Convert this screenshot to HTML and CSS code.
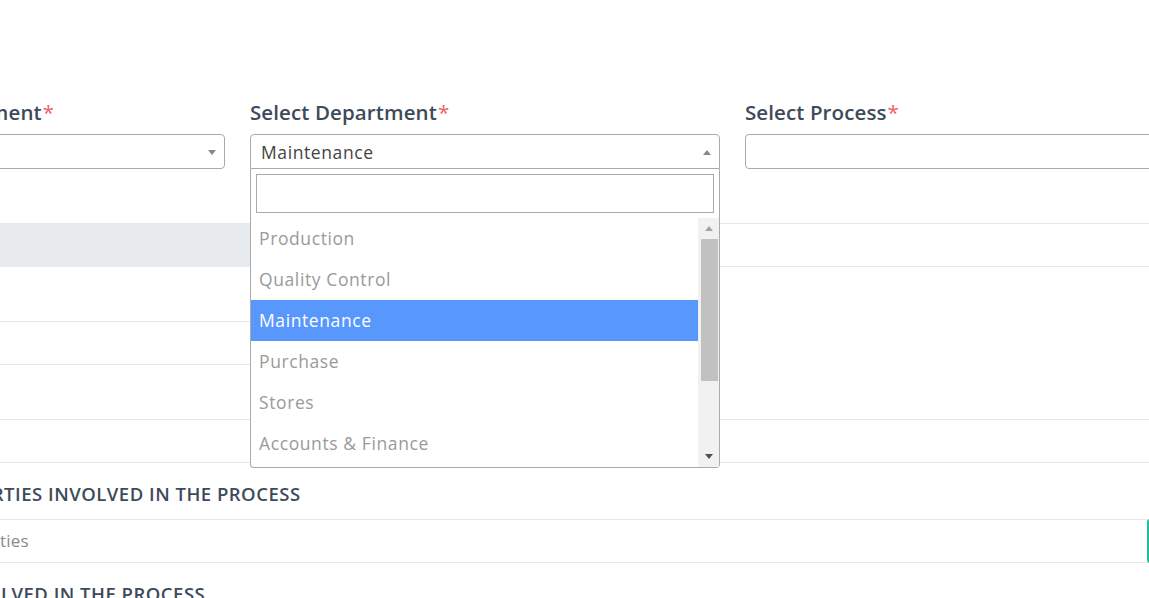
FILE: index.html
```html
<!DOCTYPE html>
<html lang="en">
<head>
<meta charset="utf-8">
<title>Process Form</title>
<link rel="stylesheet" href="styles.css">
</head>
<body>
<div class="page">
  <div class="form-row">
    <div class="field">
      <label class="label">Select Company Department<span class="req">*</span></label>
      <div class="select"><span class="select-text"></span><span class="arrow down"></span></div>
    </div>
    <div class="field">
      <label class="label">Select Department<span class="req">*</span></label>
      <div class="select open">
        <span class="select-text">Maintenance</span><span class="arrow up"></span>
        <div class="dropdown">
          <div class="search-wrap"><input class="search" type="text"></div>
          <div class="results">
            <ul class="options">
              <li>Production</li>
              <li>Quality Control</li>
              <li class="active">Maintenance</li>
              <li>Purchase</li>
              <li>Stores</li>
              <li>Accounts &amp; Finance</li>
            </ul>
            <div class="scrollbar">
              <span class="sb-btn"><span class="sb-up"></span></span>
              <span class="sb-thumb"></span>
              <span class="sb-space"></span>
              <span class="sb-btn"><span class="sb-down"></span></span>
            </div>
          </div>
        </div>
      </div>
    </div>
    <div class="field">
      <label class="label">Select Process<span class="req">*</span></label>
      <div class="select"><span class="select-text"></span></div>
    </div>
  </div>

  <div class="table">
    <div class="row-a"><div class="cell-left gray"></div><div class="cell-right"></div></div>
    <div class="row-b">
      <div class="cell-left">
        <div class="sub s1"></div>
        <div class="sub s2"></div>
        <div class="sub s3"></div>
      </div>
    </div>
    <div class="row-c"></div>
  </div>

  <div class="section">
    <h3 class="heading">THIRD PARTIES INVOLVED IN THE PROCESS</h3>
    <div class="input-row">
      <div class="input-cell">Select Third Parties</div>
      <div class="add-btn"></div>
    </div>
    <h3 class="heading">MEN INVOLVED IN THE PROCESS</h3>
  </div>
</div>
</body>
</html>
```

FILE: styles.css
```css
* { box-sizing: border-box; }

html, body {
  margin: 0;
  padding: 0;
  background: #ffffff;
  overflow: hidden;
  width: 1149px;
  height: 598px;
}

body {
  font-family: "Open Sans", "Liberation Sans", sans-serif;
  color: #444444;
}

.page {
  width: 1460px;
  margin-left: -245px;
  padding-top: 98px;
}

.form-row {
  display: grid;
  grid-template-columns: 470px 470px 470px;
  column-gap: 25px;
}

.label {
  display: block;
  font-size: 20.5px;
  font-weight: 600;
  line-height: 28px;
  letter-spacing: 0.1px;
  color: #3e4a5a;
  margin-bottom: 8px;
}

.req {
  color: #f25b64;
  margin-left: 1px;
  font-weight: 500;
}

.select {
  position: relative;
  height: 35px;
  border: 1px solid #aaaaaa;
  border-radius: 4px;
  background: #ffffff;
  padding-left: 10px;
}

.select.open {
  border-bottom-left-radius: 0;
  border-bottom-right-radius: 0;
}

.select-text {
  display: block;
  font-size: 17.5px;
  line-height: 34px;
  letter-spacing: 0.6px;
  color: #444444;
}

.arrow {
  position: absolute;
  right: 8px;
  top: 15px;
  width: 0;
  height: 0;
  border-left: 4.5px solid transparent;
  border-right: 4.5px solid transparent;
}

.arrow.down {
  border-top: 5px solid #888888;
}

.arrow.up {
  border-bottom: 5px solid #888888;
}

.dropdown {
  position: absolute;
  left: -1px;
  top: 34px;
  width: 470px;
  border: 1px solid #aaaaaa;
  border-top: 0;
  border-radius: 0 0 4px 4px;
  background: #ffffff;
  z-index: 10;
}

.search-wrap {
  padding: 5px;
}

.search {
  display: block;
  width: 100%;
  height: 39px;
  border: 1px solid #aaaaaa;
  padding: 4px;
  margin: 0;
  outline: none;
  font: inherit;
}

.results {
  display: flex;
  height: 249px;
  overflow: hidden;
}

.options {
  list-style: none;
  margin: 0;
  padding: 0;
  flex: 1;
}

.options li {
  height: 41px;
  line-height: 41px;
  padding-left: 8px;
  font-size: 17.5px;
  letter-spacing: 0.6px;
  color: #9a9a9a;
}

.options li.active {
  background: #5897fb;
  color: #ffffff;
}

.scrollbar {
  width: 21px;
  background: #f1f1f1;
  display: flex;
  flex-direction: column;
  align-items: center;
}

.sb-btn {
  height: 21px;
  width: 100%;
  display: flex;
  align-items: center;
  justify-content: center;
}

.sb-up {
  width: 0;
  height: 0;
  border-left: 4.5px solid transparent;
  border-right: 4.5px solid transparent;
  border-bottom: 5px solid #a3a3a3;
}

.sb-down {
  width: 0;
  height: 0;
  border-left: 4.5px solid transparent;
  border-right: 4.5px solid transparent;
  border-top: 5px solid #505050;
}

.sb-thumb {
  width: 17px;
  height: 142px;
  background: #c1c1c1;
  margin-left: 1px;
}

.sb-space {
  flex: 1;
}

.table {
  margin-top: 54px;
}

.row-a {
  display: flex;
  height: 44px;
}

.cell-left {
  width: 495px;
  flex: none;
}

.cell-left.gray {
  background: #e8ebee;
}

.row-a .cell-right {
  flex: 1;
  border-top: 1px solid #e6e6e6;
  border-bottom: 1px solid #e6e6e6;
}

.row-b {
  display: flex;
  height: 152px;
}

.sub {
  border-bottom: 1px solid #e6e6e6;
}

.sub.s1 { height: 55px; }
.sub.s2 { height: 43px; }
.sub.s3 { height: 54px; border-bottom: 0; }

.row-c {
  height: 44px;
  border-top: 1px solid #e6e6e6;
  border-bottom: 1px solid #e6e6e6;
}

.section {
  padding-left: 149px;
}

.heading {
  margin: 19px 0 13px 0;
  font-size: 18.5px;
  line-height: 24px;
  font-weight: 600;
  letter-spacing: 0.5px;
  color: #3e4a5a;
}

.input-row {
  display: flex;
  height: 44px;
  margin-left: -149px;
}

.input-cell {
  flex: 1;
  border-top: 1px solid #e6e6e6;
  border-bottom: 1px solid #e6e6e6;
  padding-left: 118px;
  font-size: 17px;
  line-height: 42px;
  color: #8a8a8a;
  letter-spacing: 0.2px;
}

.add-btn {
  width: 68px;
  flex: none;
  background: #1fbf9e;
  border-radius: 3px 0 0 3px;
}
```
